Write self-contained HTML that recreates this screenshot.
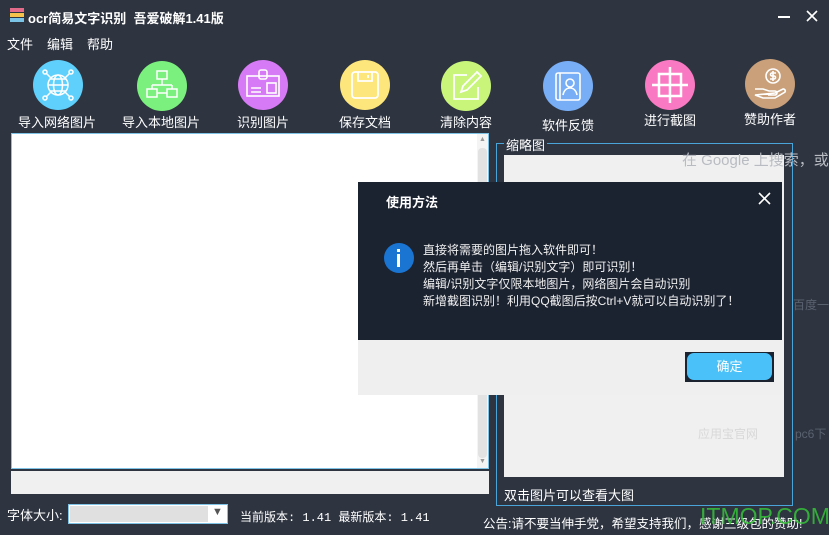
<!DOCTYPE html>
<html><head><meta charset="utf-8">
<style>
*{margin:0;padding:0;box-sizing:border-box}
body{width:829px;height:535px;overflow:hidden;background:#2e3440;position:relative;font-family:"Liberation Sans","Noto Sans CJK SC",sans-serif;color:#fff;font-size:13px}
.a{position:absolute;white-space:nowrap}
.ic{position:absolute;width:50px;height:50px;border-radius:50%}
.ic svg{position:absolute;left:0;top:0}
.lbl{position:absolute;font-size:13px;color:#fff;transform:translateX(-50%)}
</style></head><body>
<div class="a" style="left:10px;top:8px;width:14px;height:16px">
 <div style="height:4px;background:#e56b8a;margin-bottom:1px"></div>
 <div style="height:4px;background:#f5c24c;margin-bottom:1px"></div>
 <div style="height:4px;background:#7cc3e8"></div>
</div>
<div class="a" style="left:28px;top:8px;font-size:13px;font-weight:bold">ocr简易文字识别&nbsp; 吾爱破解1.41版</div>
<div class="a" style="left:778px;top:16px;width:12px;height:2px;background:#fff"></div>
<svg class="a" style="left:806px;top:10px" width="12" height="12"><path d="M1 1L11 11M11 1L1 11" stroke="#fff" stroke-width="1.6"/></svg>
<div class="a" style="left:7px;top:34px">文件</div>
<div class="a" style="left:47px;top:34px">编辑</div>
<div class="a" style="left:87px;top:34px">帮助</div>

<div class="ic" style="left:33px;top:60px;background:#5ed0fb"><svg width="50" height="50" fill="none" stroke="#fff" stroke-width="1.5"><circle cx="25" cy="25" r="10"/><ellipse cx="25" cy="25" rx="4.5" ry="10"/><path d="M15 25h20M17 19h16M17 31h16M18 18l-5-5M32 18l5-5M18 32l-5 5M32 32l5 5"/><circle cx="12" cy="12" r="2"/><circle cx="38" cy="12" r="2"/><circle cx="12" cy="38" r="2"/><circle cx="38" cy="38" r="2"/></svg></div>
<div class="lbl" style="left:57px;top:112px">导入网络图片</div>
<div class="ic" style="left:137px;top:61px;background:#7bf07e"><svg width="50" height="50" fill="none" stroke="#fff" stroke-width="1.5"><rect x="20" y="10" width="10" height="8"/><path d="M25 18v6M15 24h20M15 24v4M35 24v4"/><rect x="10" y="28" width="10" height="8"/><rect x="30" y="28" width="10" height="8"/><path d="M20 32h10"/></svg></div>
<div class="lbl" style="left:161px;top:112px">导入本地图片</div>
<div class="ic" style="left:238px;top:60px;background:#d77af5"><svg width="50" height="50" fill="none" stroke="#fff" stroke-width="1.6"><rect x="9" y="16" width="32" height="20"/><rect x="21" y="10" width="8" height="9" rx="2"/><path d="M13 28h10M13 32h10"/><rect x="29" y="23" width="9" height="10"/></svg></div>
<div class="lbl" style="left:263px;top:112px">识别图片</div>
<div class="ic" style="left:340px;top:60px;background:#fde67c"><svg width="50" height="50" fill="none" stroke="#fff" stroke-width="1.8"><rect x="12" y="12" width="26" height="26" rx="3"/><path d="M18 12v9h14v-9M28 15v3"/></svg></div>
<div class="lbl" style="left:365px;top:112px">保存文档</div>
<div class="ic" style="left:441px;top:61px;background:#c8f57a"><svg width="50" height="50" fill="none" stroke="#fff" stroke-width="1.8"><path d="M26 14H13v24h24V26"/><path d="M20 31l2-6 14-14 4 4-14 14z"/></svg></div>
<div class="lbl" style="left:466px;top:112px">清除内容</div>
<div class="ic" style="left:543px;top:61px;background:#78aef6"><svg width="50" height="50" fill="none" stroke="#fff" stroke-width="1.6"><rect x="13" y="12" width="24" height="27" rx="2"/><path d="M17 12v27"/><circle cx="27" cy="22" r="4"/><path d="M20 34c1-5 4-7 7-7s6 2 7 7"/></svg></div>
<div class="lbl" style="left:568px;top:115px">软件反馈</div>
<div class="ic" style="left:645px;top:60px;background:#f97ac2"><svg width="50" height="50" fill="none" stroke="#fff" stroke-width="2.5"><rect x="14" y="14" width="22" height="22"/><path d="M25 7v36M7 25h36"/></svg></div>
<div class="lbl" style="left:670px;top:110px">进行截图</div>
<div class="ic" style="left:745px;top:59px;background:#c9a07a"><svg width="50" height="50" fill="none" stroke="#fff" stroke-width="1.6"><circle cx="28" cy="17" r="7"/><path d="M28 12v10M31 14h-4a1.5 1.5 0 0 0 0 3h2a1.5 1.5 0 0 1 0 3h-4"/><path d="M10 30h8l6 2h6a2 2 0 0 1 0 4h-7M30 34l8-4a2 2 0 0 1 2 3l-10 6H18l-8-3z"/></svg></div>
<div class="lbl" style="left:770px;top:109px">赞助作者</div>

<div class="a" style="left:11px;top:133px;width:478px;height:336px;background:#fff;border:1px solid #7fc3e6"></div>
<div class="a" style="left:477px;top:134px;width:11px;height:334px;background:#f4f4f4"></div>
<div class="a" style="left:478px;top:148px;width:9px;height:310px;background:#e2e2e2;border-radius:4px"></div>
<div class="a" style="left:479px;top:136px;font-size:7px;color:#999">▲</div>
<div class="a" style="left:479px;top:458px;font-size:7px;color:#999">▼</div>
<div class="a" style="left:11px;top:471px;width:478px;height:23px;background:#f0f0f0"></div>

<div class="a" style="left:7px;top:505px;font-size:13px">字体大小:</div>
<div class="a" style="left:68px;top:504px;width:160px;height:20px;background:#fff;border:1px solid #7fc3e6"></div>
<div class="a" style="left:70px;top:506px;width:138px;height:16px;background:#e0e0e0"></div>
<div class="a" style="left:212px;top:506px;font-size:11px;color:#555">▼</div>
<div class="a" style="left:240px;top:508px;font-size:12px;font-family:'Liberation Mono','Noto Sans CJK SC',monospace">当前版本: 1.41 最新版本: 1.41</div>
<div class="a" style="left:483px;top:513px;font-size:12.5px">公告:请不要当伸手党，希望支持我们，感谢三级包的赞助!</div>

<div class="a" style="left:793px;top:296px;font-size:12px;color:#5a6270">百度一</div>
<div class="a" style="left:795px;top:425px;font-size:12px;color:#5a6270">pc6下</div>

<div class="a" style="left:496px;top:143px;width:297px;height:363px;border:1px solid #4aa3d9"></div>
<div class="a" style="left:504px;top:135px;background:#2e3440;padding:0 2px;font-size:13px">缩略图</div>
<div class="a" style="left:504px;top:155px;width:280px;height:322px;background:#f0f0f0"></div>
<div class="a" style="left:682px;top:149px;font-size:15px;color:#b8bcc2">在 Google 上搜索，或</div>
<div class="a" style="left:698px;top:425px;font-size:12px;color:#d8d8d8">应用宝官网</div>
<div class="a" style="left:504px;top:485px;font-size:13px">双击图片可以查看大图</div>

<div class="a" style="left:358px;top:182px;width:424px;height:158px;background:#1b2230"></div>
<div class="a" style="left:358px;top:340px;width:424px;height:55px;background:#efefef"></div>
<div class="a" style="left:386px;top:192px;font-size:13px;font-weight:bold">使用方法</div>
<svg class="a" style="left:758px;top:192px" width="13" height="13"><path d="M1 1L12 12M12 1L1 12" stroke="#fff" stroke-width="1.6"/></svg>
<div class="a" style="left:384px;top:243px;width:30px;height:30px;border-radius:50%;background:#1a74d2"></div>
<div class="a" style="left:397px;top:249px;width:3px;height:3px;background:#fff"></div>
<div class="a" style="left:397px;top:254px;width:3px;height:13px;background:#fff"></div>
<div class="a" style="left:423px;top:242px;font-size:12px;line-height:17px;color:#f0f0f0">直接将需要的图片拖入软件即可！<br>然后再单击（编辑/识别文字）即可识别！<br>编辑/识别文字仅限本地图片，网络图片会自动识别<br>新增截图识别！利用QQ截图后按Ctrl+V就可以自动识别了！</div>
<div class="a" style="left:685px;top:352px;width:89px;height:30px;background:#1b2230"></div>
<div class="a" style="left:687px;top:353px;width:85px;height:27px;background:#4bc1f9;border-radius:7px;text-align:center;line-height:27px;font-size:13px">确定</div>

<div class="a" style="left:700px;top:503px;font-size:23px;color:#36c23a;opacity:.85">ITMOP.COM</div>
</body></html>
